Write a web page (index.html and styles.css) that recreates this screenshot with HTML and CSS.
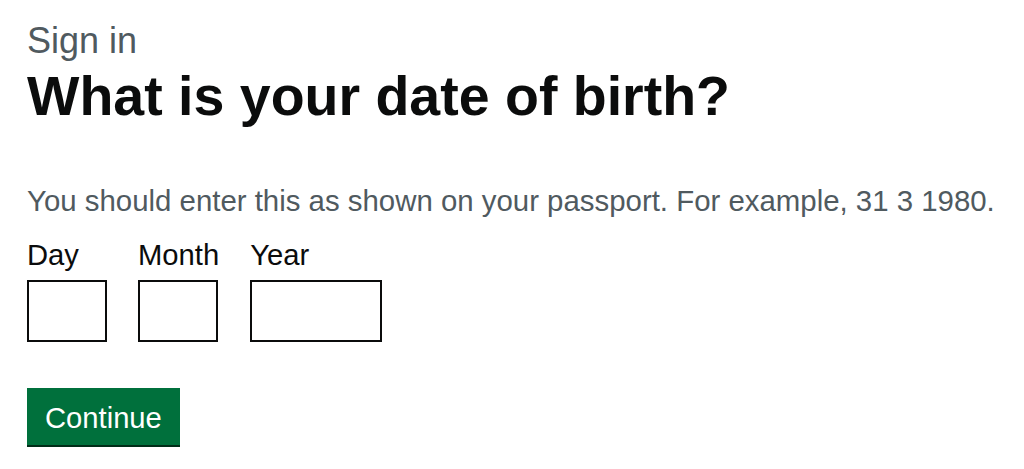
FILE: index.html
```html
<!DOCTYPE html>
<html lang="en">
<head>
  <meta charset="UTF-8" />
  <title>What is your date of birth?</title>
  <link rel="stylesheet" href="styles.css">
</head>
<body>
  <main class="page">
    <span class="caption">Sign in</span>
    <h1 class="heading">What is your date of birth?</h1>

    <form class="dob-form">
      <p class="hint">You should enter this as shown on your passport. For example, 31 3 1980.</p>
      <div class="date-input">
        <div class="date-item">
          <label for="day">Day</label>
          <input type="text" id="day" class="input-2" />
        </div>
        <div class="date-item">
          <label for="month">Month</label>
          <input type="text" id="month" class="input-2" />
        </div>
        <div class="date-item">
          <label for="year">Year</label>
          <input type="text" id="year" class="input-4" />
        </div>
      </div>
      <button type="submit" class="button">Continue</button>
    </form>
  </main>
</body>
</html>
```

FILE: styles.css
```css
body {
  font-family: 'Liberation Sans', Arial, sans-serif;
  color: #0b0c0c;
  background: white;
  margin: 0;
  padding: 0;
}

.page {
  padding: 21px 27px;
}

.caption {
  display: block;
  font-size: 36px;
  line-height: 40px;
  margin-bottom: 5px;
  color: #505a5f;
}

.heading {
  margin: 0 0 57px;
  font-size: 55.5px;
  line-height: 60px;
  font-weight: bold;
}

.hint {
  margin: 0 0 18px;
  font-size: 29.4px;
  line-height: 36px;
  color: #505a5f;
}

.date-input {
  display: flex;
  gap: 31px;
  margin-bottom: 46px;
}

.date-item {
  display: flex;
  flex-direction: column;
}

.date-item label {
  font-size: 29.2px;
  line-height: 36px;
  margin-bottom: 7px;
}

.date-item input {
  box-sizing: border-box;
  height: 62px;
  border: 2px solid #0b0c0c;
  margin: 0;
  padding: 5px;
  font-size: 29px;
  font-family: inherit;
}

.input-2 {
  width: 80px;
}

.input-4 {
  width: 132px;
}

.button {
  font-family: inherit;
  font-size: 29.2px;
  line-height: 36px;
  color: white;
  background: #00703c;
  border: none;
  padding: 12px 18px 9px;
  box-shadow: 0 2px 0 #002d18;
  cursor: pointer;
}
```
